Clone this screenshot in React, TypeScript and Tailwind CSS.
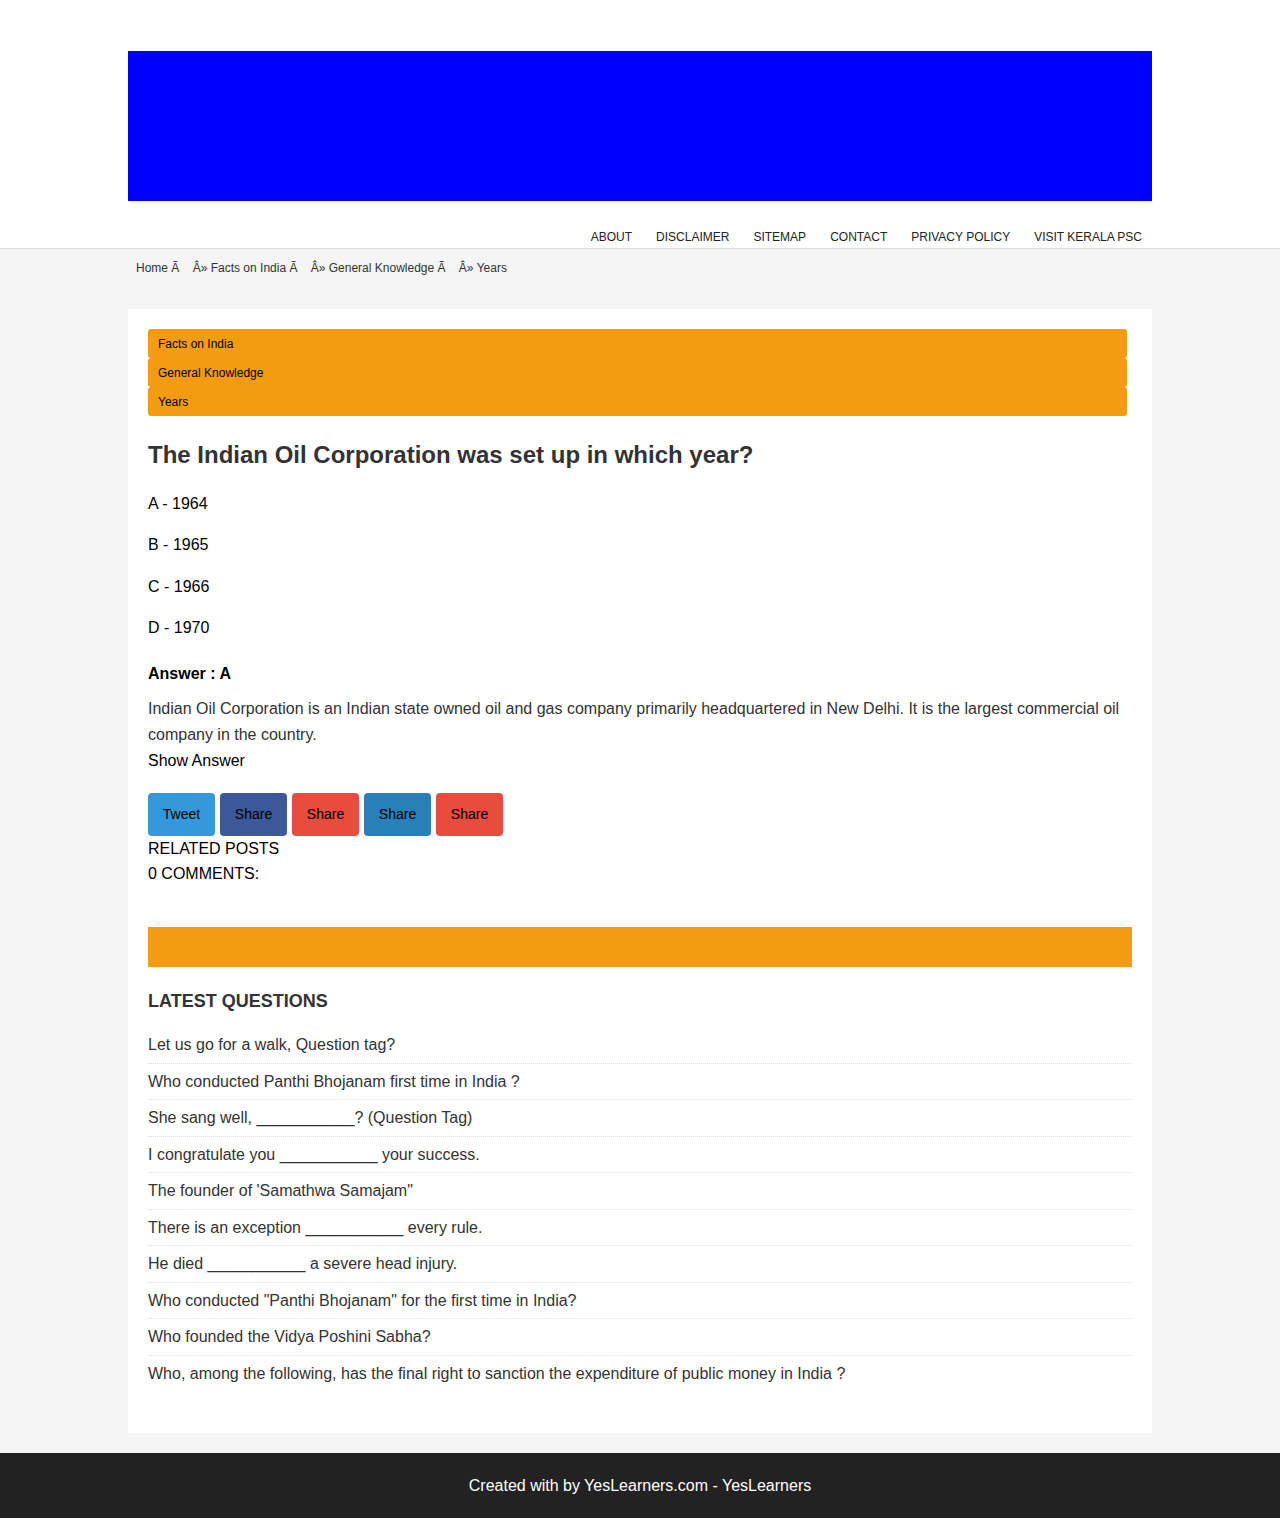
const navLinks = ["ABOUT", "DISCLAIMER", "SITEMAP", "CONTACT", "PRIVACY POLICY", "VISIT KERALA PSC"];

const labels = ["Facts on India", "General Knowledge", "Years"];

const options = ["A - 1964", "B - 1965", "C - 1966", "D - 1970"];

const shares = [
  { text: "Tweet", cls: "bg-[#3498db]" },
  { text: "Share", cls: "bg-[#3b5998]" },
  { text: "Share", cls: "bg-[#e74c3c]" },
  { text: "Share", cls: "bg-[#2980b9]" },
  { text: "Share", cls: "bg-[#e74c3c]" },
];

const latest = [
  "Let us go for a walk, Question tag?",
  "Who conducted Panthi Bhojanam first time in India ?",
  "She sang well, ___________? (Question Tag)",
  "I congratulate you ___________ your success.",
  "The founder of 'Samathwa Samajam\"",
  "There is an exception ___________ every rule.",
  "He died ___________ a severe head injury.",
  "Who conducted \"Panthi Bhojanam\" for the first time in India?",
  "Who founded the Vidya Poshini Sabha?",
  "Who, among the following, has the final right to sanction the expenditure of public money in India ?",
];

export default function App() {
  return (
    <div className="bg-[#f5f5f5] font-['Liberation_Sans',Arial,sans-serif] text-[#333]">
      {/* Header */}
      <header className="border-b border-[#ddd] bg-white">
        <div className="mx-auto w-[1024px] pt-[51px]">
          <div className="h-[150px] bg-[#0000ff]" />
          <nav className="flex h-[47px] items-center justify-end gap-6 pr-[10px] pt-[25px] text-[12px] text-[#222]">
            {navLinks.map((l) => (
              <a key={l} className="leading-none">
                {l}
              </a>
            ))}
          </nav>
        </div>
      </header>

      {/* Breadcrumb */}
      <div className="mx-auto w-[1024px] px-2 pt-[12px] text-[12px] leading-[14px] text-[#333] whitespace-pre">
        {"Home Ã    Â» Facts on India Ã    Â» General Knowledge Ã    Â» Years"}
      </div>

      {/* Post card */}
      <main className="mx-auto mt-[34px] w-[1024px] bg-white px-5 pb-[42px] pt-5">
        <div className="w-[979px]">
          {labels.map((l) => (
            <div key={l} className="flex h-[29px] items-center rounded-[3px] bg-[#f39c12] px-[10px] text-[12px] text-black">
              {l}
            </div>
          ))}
        </div>

        <h1 className="mt-[25px] text-[24px] font-bold leading-[28px] text-[#333]">
          The Indian Oil Corporation was set up in which year?
        </h1>

        <div className="mt-[26px] flex flex-col gap-[22.8px] text-[16px] leading-[18.5px] text-black">
          {options.map((o) => (
            <p key={o}>{o}</p>
          ))}
        </div>

        <p className="mt-[28px] text-[16px] font-bold leading-[18px] text-black">Answer : A</p>
        <p className="mt-[13px] text-[16px] leading-[26px] text-[#333]">
          Indian Oil Corporation is an Indian state owned oil and gas company primarily headquartered in New Delhi. It is the largest commercial oil company in the country.
        </p>
        <p className="text-[16px] leading-[26px] text-black">Show Answer</p>

        <div className="mt-[19px] flex gap-[5px]">
          {shares.map((s, i) => (
            <button
              key={i}
              className={`flex h-[43px] w-[67px] items-center justify-center rounded-[4px] text-[14px] text-black ${s.cls}`}
            >
              {s.text}
            </button>
          ))}
        </div>
        <p className="text-[16px] leading-[25px] text-black">RELATED POSTS</p>
        <p className="text-[16px] leading-[25px] text-black">0 COMMENTS:</p>

        <div className="mt-[41px] h-[40px] w-[984px] bg-[#f39c12]" />

        <h2 className="mt-[24px] text-[18px] font-bold uppercase leading-[20px] text-[#333]">Latest Questions</h2>

        <ul className="mt-[24px] w-[984px]">
          {latest.map((q, i) => (
            <li
              key={i}
              className={`text-[16px] leading-[19.5px] text-[#333] ${
                i === 0 ? "pb-[8px]" : "border-t border-dotted border-[#ddd] py-[8px]"
              }`}
            >
              {q}
            </li>
          ))}
        </ul>
      </main>

      {/* Footer */}
      <footer className="mt-[20px] flex h-[65px] items-center justify-center bg-[#222] text-[16px] text-white">
        Created with by YesLearners.com - YesLearners
      </footer>
    </div>
  );
}
